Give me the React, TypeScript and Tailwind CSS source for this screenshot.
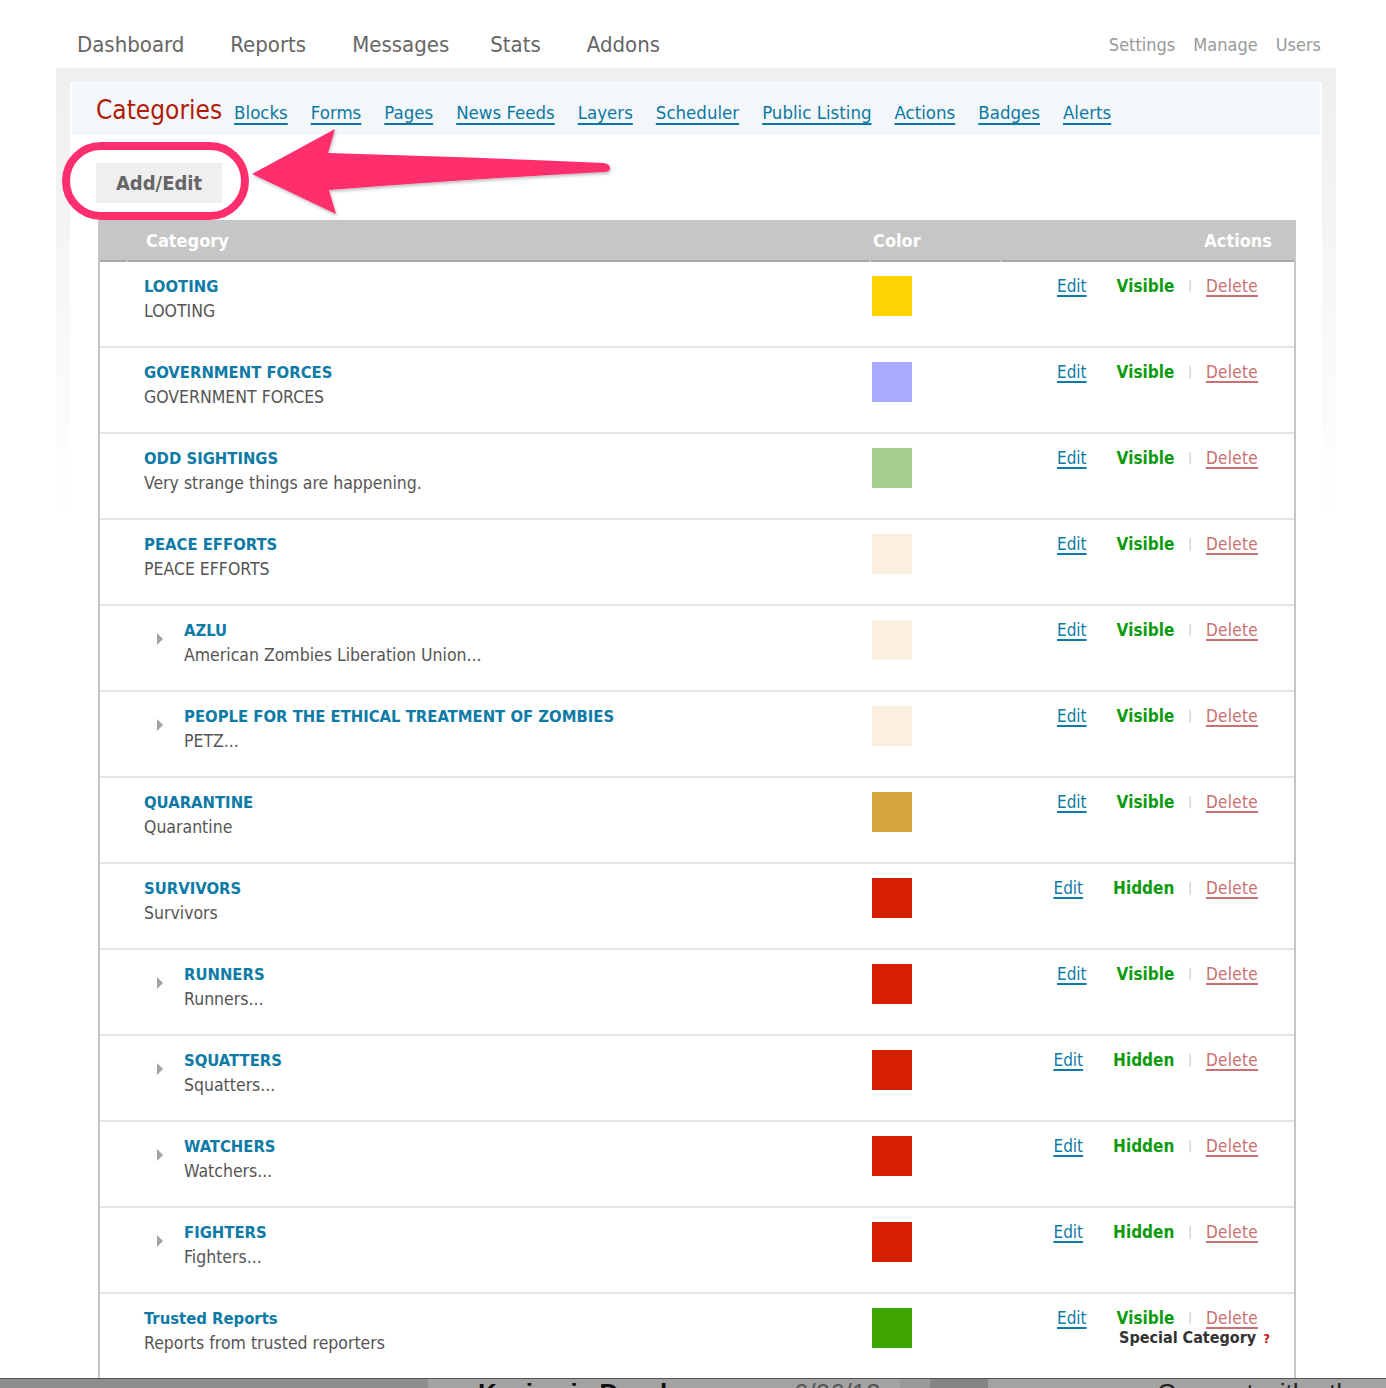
import React from "react";

type Row = {
  title: string;
  desc: string;
  color: string;
  hidden?: boolean;
  child?: boolean;
  special?: boolean;
};

const ROWS: Row[] = [
  { title: "LOOTING", desc: "LOOTING", color: "#ffd400" },
  { title: "GOVERNMENT FORCES", desc: "GOVERNMENT FORCES", color: "#aaaaff" },
  { title: "ODD SIGHTINGS", desc: "Very strange things are happening.", color: "#a7cf8f" },
  { title: "PEACE EFFORTS", desc: "PEACE EFFORTS", color: "#faefe1" },
  { title: "AZLU", desc: "American Zombies Liberation Union...", color: "#faefe1", child: true },
  { title: "PEOPLE FOR THE ETHICAL TREATMENT OF ZOMBIES", desc: "PETZ...", color: "#faefe1", child: true },
  { title: "QUARANTINE", desc: "Quarantine", color: "#d6a641" },
  { title: "SURVIVORS", desc: "Survivors", color: "#d71f03", hidden: true },
  { title: "RUNNERS", desc: "Runners...", color: "#d71f03", child: true },
  { title: "SQUATTERS", desc: "Squatters...", color: "#d71f03", child: true, hidden: true },
  { title: "WATCHERS", desc: "Watchers...", color: "#d71f03", child: true, hidden: true },
  { title: "FIGHTERS", desc: "Fighters...", color: "#d71f03", child: true, hidden: true },
  { title: "Trusted Reports", desc: "Reports from trusted reporters", color: "#3da402", special: true },
];

const SUBNAV = ["Blocks", "Forms", "Pages", "News Feeds", "Layers", "Scheduler", "Public Listing", "Actions", "Badges", "Alerts"];

function CategoryRow({ row }: { row: Row }) {
  return (
    <div className="flex h-[86px] border-b-2 border-[#e4e4e4]">
      <div className="w-[28px] shrink-0" />
      <div className="flex w-[743px] shrink-0 pt-[13px]">
        {row.child ? (
          <div className="flex w-[56px] shrink-0 items-center justify-start self-start pl-[29px] pt-[14px]">
            <span className="h-0 w-0 border-y-[6px] border-l-[6px] border-y-transparent border-l-[#a3a3a3]" />
          </div>
        ) : (
          <div className="w-[16px] shrink-0" />
        )}
        <div>
          <div className="text-[16.5px] leading-[24px] font-bold text-[#0e7aa6]">{row.title}</div>
          <div className="text-[17.5px] leading-[24px] text-[#555]">{row.desc}</div>
        </div>
      </div>
      <div className="w-[131px] shrink-0 pt-[14px] pl-px">
        <div className="h-[40px] w-[40px]" style={{ backgroundColor: row.color }} />
      </div>
      <div className="flex flex-1 flex-col items-end pt-[12px] pr-[36px] text-[17px] leading-[24px]">
        <div className="flex items-center">
          <a href="#" className="text-[#0e7aa6] underline decoration-[1.5px] underline-offset-[3px]">
            Edit
          </a>
          <span className="ml-[30px] font-bold text-[#0d9a0d]">{row.hidden ? "Hidden" : "Visible"}</span>
          <span className="mx-[14px] text-[12px] text-[#c4c4c4]">|</span>
          <a href="#" className="tracking-[0.3px] text-[#c97070] underline decoration-[1.5px] underline-offset-[3px]">
            Delete
          </a>
        </div>
        {row.special && (
          <div className="-mr-[12px] mt-[-4px] self-end text-[16px] font-bold text-[#333]">
            Special Category <span className="ml-[2px] text-[13px] text-[#cc1111]">?</span>
          </div>
        )}
      </div>
    </div>
  );
}

function Annotation() {
  return (
    <svg className="pointer-events-none absolute left-0 top-0" width="700" height="260" viewBox="0 0 700 260">
      <defs>
        <filter id="sh" x="-10%" y="-30%" width="120%" height="160%">
          <feDropShadow dx="1" dy="2" stdDeviation="1.5" floodColor="#000" floodOpacity="0.25" />
        </filter>
      </defs>
      <rect x="66" y="146" width="179" height="70" rx="35" fill="none" stroke="#ff2f6d" strokeWidth="8" />
      <path
        d="M252 174 L335 129 L328 153 Q470 157 604 163 Q610 164 610 168 Q610 172 604 172 Q470 179 329 190 L336 214 Z"
        fill="#ff2f6d"
        filter="url(#sh)"
      />
    </svg>
  );
}

export default function App() {
  return (
    <div className="relative h-[1388px] overflow-hidden bg-white font-['DejaVu_Sans_Condensed','DejaVu_Sans',sans-serif]">
      <div className="flex h-[68px] items-center justify-between pl-[77px] pr-[65px] pt-[20px]">
        <nav className="flex gap-[46px] text-[22px] text-[#666]">
          <a href="#">Dashboard</a>
          <a href="#">Reports</a>
          <a href="#">Messages</a>
          <a href="#" className="-ml-[5px]">Stats</a>
          <a href="#">Addons</a>
        </nav>
        <nav className="flex gap-[18px] text-[18px] text-[#999]">
          <a href="#">Settings</a>
          <a href="#">Manage</a>
          <a href="#">Users</a>
        </nav>
      </div>

      <div className="ml-[56px] mr-[50px] bg-[linear-gradient(to_bottom,#efefef,#fff_450px)] px-[14px] pt-[14px]">
        <div className="bg-white pt-px">
          <div className="mx-[2px] flex h-[52px] items-center gap-[12px] bg-[#f3f7fa] pl-[24px] pt-[3px]">
            <span className="text-[26px] text-[#b21a08]">Categories</span>
            <div className="flex gap-[23px] pt-[4px] text-[18.5px] text-[#0b78a3]">
              {SUBNAV.map((s) => (
                <a key={s} href="#" className="underline decoration-2 underline-offset-[4px]">
                  {s}
                </a>
              ))}
            </div>
          </div>

          <div className="pl-[26px] pt-[28px]">
            <button className="flex h-[40px] w-[126px] items-center justify-center bg-[#efefef] text-[20px] font-bold text-[#666]">
              Add/Edit
            </button>
          </div>

          <div className="ml-[28px] mr-[26px] mt-[17px] border-x-2 border-[#c6c6c6]">
            <div className="flex h-[42px] bg-[#c6c6c6] text-[18px] font-bold text-white">
              <div className="w-[26px] border-b-2 border-[#a9a9a9]" />
              <div className="ml-[2px] flex w-[741px] items-center border-b-2 border-[#a9a9a9] pl-[18px]">Category</div>
              <div className="ml-[2px] flex w-[129px] items-center border-b-2 border-[#a9a9a9] pl-[2px]">Color</div>
              <div className="ml-[2px] flex flex-1 items-center justify-end border-b-2 border-[#a9a9a9] pr-[22px]">
                Actions
              </div>
            </div>
            {ROWS.map((r) => (
              <CategoryRow key={r.title} row={r} />
            ))}
          </div>
        </div>
      </div>

      <Annotation />

      <div className="absolute bottom-0 left-0 flex h-[10px] w-full overflow-hidden border-t border-[#555] font-['Liberation_Sans',sans-serif] text-[26px] leading-[30px]">
        <div className="w-[428px] bg-[#8e8e8e]" />
        <div className="relative w-[472px] bg-[#a3a3a3]">
          <span className="absolute left-[50px] top-[-1px] font-bold text-[#111]">Kevin via Dropbox</span>
          <span className="absolute left-[366px] top-[-1px] text-[#555]">6/06/13</span>
        </div>
        <div className="w-[30px] bg-[#9a9a9a]" />
        <div className="w-[58px] bg-[#858585]" />
        <div className="relative flex-1 bg-[#a3a3a3]">
          <span className="absolute left-[169px] top-[-1px] text-[#222]">Connect with other</span>
        </div>
      </div>
    </div>
  );
}
